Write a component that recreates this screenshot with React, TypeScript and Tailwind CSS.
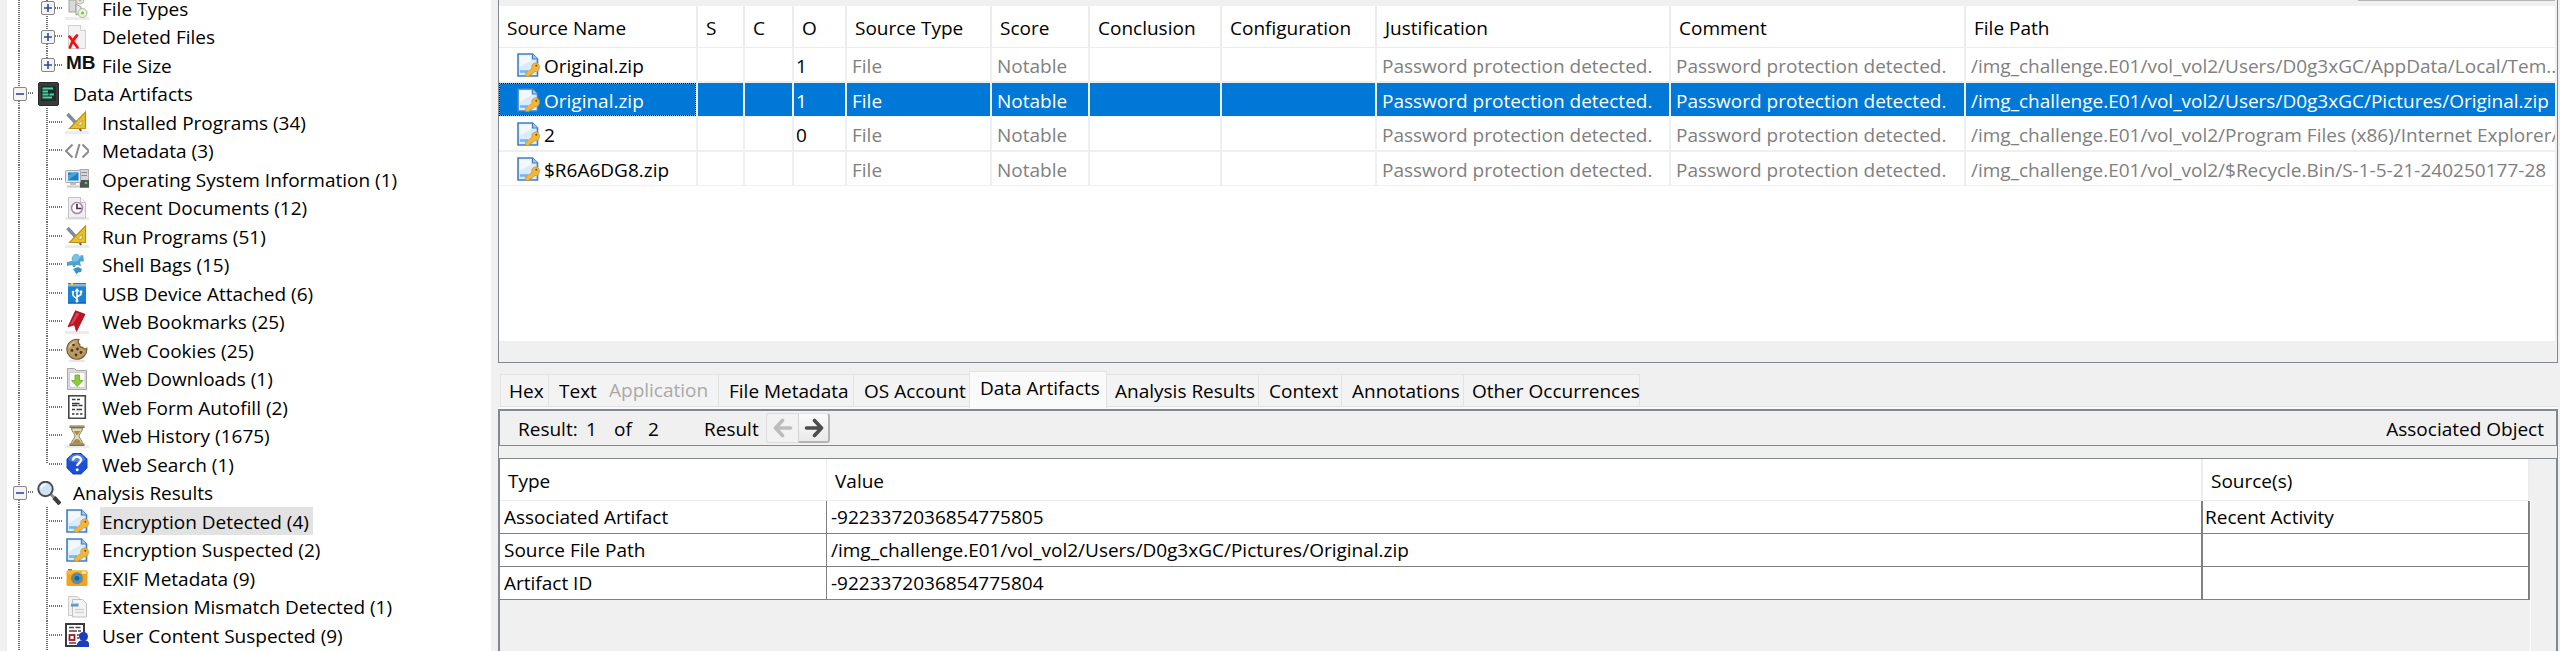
import type { ReactNode } from "react";

/* ---------- Icons ---------- */

function Svg({ children }: { children: ReactNode }) {
  return (
    <svg viewBox="0 0 24 24" className="size-6 shrink-0" aria-hidden="true">
      {children}
    </svg>
  );
}

const Shadow = () => <rect x="0" y="21" width="24" height="3" fill="#ececec" />;

const FileTypesIcon = () => (
  <Svg>
    <Shadow />
    <rect x="4" y="4" width="7" height="12" fill="#d9d9d9" stroke="#a3a3a3" />
    <path d="M11 8l5 3v6l-5 2z" fill="#ededed" stroke="#9a9a9a" />
    <circle cx="15" cy="4" r="4" fill="#f4e3cf" stroke="#c3b3a4" />
    <circle cx="15" cy="4" r="1.5" fill="#7fc3d4" />
    <circle cx="17.500" cy="17" r="4.500" fill="#e7f3d6" stroke="#a5bd8c" />
    <circle cx="17.500" cy="17" r="1.500" fill="#79c152" />
  </Svg>
);

const DeletedIcon = () => (
  <Svg>
    <path d="M3.500 .5h12l5 5v18h-17z" fill="#f3f3f3" stroke="#cfcfcf" />
    <path d="M15.500 .5v5h5" fill="#fff" stroke="#cfcfcf" />
    <path d="M4.500 11.500l8 11M12 10.500c-3 3-5.500 7-7 12" fill="none" stroke="#f01010" strokeWidth="2.600" strokeLinecap="round" />
  </Svg>
);

const DataArtifactsIcon = () => (
  <Svg>
    <rect x="1.500" y=".5" width="20" height="23" rx="1.500" fill="#3a3b3c" stroke="#2a2b2c" />
    <rect x="4" y="4" width="15" height="15" fill="#222b29" />
    <path d="M5.500 6.500h10.500M5.500 9.500h5.500M5.500 12.500h6M12.500 12.500h4.500M5.500 15.500h9.500" stroke="#3fd6a0" strokeWidth="1.900" />
  </Svg>
);

const ToolsIcon = () => (
  <Svg>
    <Shadow />
    <path d="M2.500 4l12 13" stroke="#7d8c99" strokeWidth="3.400" />
    <path d="M14 17l2 4" stroke="#4b5a66" strokeWidth="2" />
    <path d="M20.500 2v16.500H4.500z" fill="#e8c12c" stroke="#b8921a" strokeWidth="1.200" />
    <path d="M17 10.500v4.500h-4.500z" fill="#fff" stroke="#b8921a" strokeWidth=".8" />
  </Svg>
);

const CodeIcon = () => (
  <Svg>
    <path d="M7.500 5.500L1 12l6.500 6.500M17.500 5.500L24 12l-6.500 6.500M14.500 5l-4 14" fill="none" stroke="#8c8c8c" strokeWidth="2" />
  </Svg>
);

const ComputerIcon = () => (
  <Svg>
    <rect x="15" y="2.500" width="8.500" height="18" fill="#d6d6d6" stroke="#ababab" />
    <path d="M16.500 5.500h5.500M16.500 8.500h5.500" stroke="#8d8d8d" />
    <rect x="15" y="13" width="9" height="7.500" fill="#4f5355" />
    <circle cx="21" cy="16" r="1.300" fill="#52d648" />
    <rect x=".5" y="3.500" width="15" height="12" rx="1" fill="#e8e8e8" stroke="#a9a9a9" />
    <rect x="3" y="5.500" width="10.500" height="8" fill="#1680c9" />
    <path d="M3 13.500V8l6-2.500h4.500z" fill="#45a5e3" />
    <path d="M5 16h6v2H5z" fill="#bcbcbc" />
    <path d="M2 18.500h12v2H2z" fill="#c9c9c9" />
  </Svg>
);

const RecentIcon = () => (
  <Svg>
    <Shadow />
    <path d="M3.500 1.500h12l5 5v15.500h-17z" fill="#efefef" stroke="#c2c2c2" />
    <path d="M15.500 1.500v5h5" fill="#fff" stroke="#c2c2c2" />
    <circle cx="12" cy="12" r="5.500" fill="#fbfafc" stroke="#a88bb5" strokeWidth="1.600" />
    <path d="M12 8v4.500h4.500" fill="none" stroke="#3d3347" strokeWidth="1.700" />
  </Svg>
);

const ShellBagsIcon = () => (
  <Svg>
    <path
      d="M8 3c1-3 6-3 6 0l4-1 1 6c-2 1-3 0-4 1l1 4-4-1c-2 0-1 2-3 2s-1-2-2-2l-5 1V9l5-1c0-2-1-3 1-5z"
      fill="#4ea3cd"
    />
    <path d="M8 3c1-3 6-3 6 0l3-.5-5 6-5 0c1-2 0-4 1-5.500z" fill="#7cc2e0" />
    <path d="M8 16l5-2 4 2-1 3-3 .5-1.500 2-1.500-2.500z" fill="#3d94c2" />
    <path d="M10 22.500h5" stroke="#d4e8f2" strokeWidth="1.500" />
  </Svg>
);

const UsbIcon = () => (
  <Svg>
    <rect x="3" y="2.500" width="18" height="20" fill="#1b82d6" />
    <rect x="3" y="2.500" width="18" height="3" fill="#8fb4d1" />
    <path d="M3 2.500h18" stroke="#5a7186" />
    <circle cx="7" cy="3" r="1.300" fill="#ffe400" />
    <path d="M3 22h18" stroke="#0c4f91" />
    <path d="M12 20.500V9M12 18l-4-3.500V11M12 16l4-2.500v-3" fill="none" stroke="#fff" strokeWidth="1.500" />
    <path d="M9.500 10.500L12 7l2.500 3.500z" fill="#fff" />
    <circle cx="8" cy="11" r="1.300" fill="#fff" />
    <rect x="14.800" y="9.500" width="2.500" height="2.500" fill="#fff" />
    <circle cx="12" cy="20" r="1.500" fill="#fff" />
  </Svg>
);

const BookmarkIcon = () => (
  <Svg>
    <Shadow />
    <path d="M10.500 .8l9.500 3.500-8.500 17-2-6.500-6.500 2z" fill="#c01220" stroke="#8e0c18" strokeWidth=".8" />
    <path d="M11.500 2.500l3 1.200-6.500 10-3 1z" fill="#dd4450" />
  </Svg>
);

const CookieIcon = () => (
  <Svg>
    <path d="M4 23h16" stroke="#e6e6e6" strokeWidth="2" />
    <path
      d="M14 1.500a10 10 0 1 0 7.800 8.800c-1.500 1.200-3.500.7-4-1-2 .5-3.500-1-3-2.800-1.500-1-2-3-.8-5z"
      fill="#b99a67"
      stroke="#7a5c33"
      strokeWidth="1.200"
    />
    <path d="M11 3c-4 .5-7 3.500-7.500 7.500l4-3z" fill="#d8c096" />
    <g fill="#4c3519">
      <circle cx="8.500" cy="7" r="1.300" />
      <circle cx="7" cy="12.500" r="1.400" />
      <circle cx="12.500" cy="11" r="1.400" />
      <circle cx="16" cy="14.500" r="1.400" />
      <circle cx="11" cy="17" r="1.400" />
    </g>
  </Svg>
);

const DownloadIcon = () => (
  <Svg>
    <path d="M2.500 1.500h7l2 2h10v19h-19z" fill="#dcdcdc" stroke="#a8a8a8" />
    <rect x="4.500" y="5.500" width="15.500" height="15" fill="#fafafa" stroke="#cecece" />
    <path d="M10 8h4.500v5.500H18L12.200 19.500 6.500 13.500H10z" fill="#8ccb3a" stroke="#6aa524" strokeWidth=".8" />
  </Svg>
);

const FormIcon = () => (
  <Svg>
    <rect x="3.800" y=".8" width="16.500" height="22.500" fill="#fff" stroke="#484848" strokeWidth="1.600" />
    <path
      d="M7 4.500h3.500M12 4.500h3M7 8.500h7.500M7 10.500h5.500M13.500 10.500h4M7 14.500h3M11.500 14.500h5.500M7 19h2.500M11 19h2.500M15 19h2.500"
      stroke="#3c3c3c"
      strokeWidth="1.400"
    />
  </Svg>
);

const HistoryIcon = () => (
  <Svg>
    <Shadow />
    <path d="M6.500 4h11c0 4-3.500 5.500-3.500 8s3.500 4 3.500 8h-11c0-4 3.500-5.500 3.500-8S6.500 8 6.500 4z" fill="#e2dbc2" stroke="#8a7c4e" />
    <path d="M8.500 7h7l-3 4h-1zM8 19c0-2 2.500-4 4-4s4 2 4 4z" fill="#a58f4e" />
    <path d="M4.500 2.800h15M4.500 20.800h15" stroke="#7f7145" strokeWidth="2.600" />
    <path d="M5 2.300h14M5 20.200h14" stroke="#b9ad80" strokeWidth=".8" />
  </Svg>
);

const HelpIcon = () => (
  <Svg>
    <path d="M8 1h8l6.500 6v9L16 22.500H8L1.500 16V7z" fill="#1442c4" />
    <circle cx="12" cy="11.500" r="10" fill="#1d50d2" />
    <path d="M3.500 8a9 9 0 0 1 17 0c-5 3-12 3-17 0z" fill="#4d7fe8" />
    <path d="M8 8.500c0-5 8-5 8-.5 0 3-3.800 3-3.800 6" fill="none" stroke="#fff" strokeWidth="2.400" />
    <circle cx="12.200" cy="17.800" r="1.500" fill="#fff" />
  </Svg>
);

const MagnifierIcon = () => (
  <Svg>
    <path d="M14 13.500l4 4" stroke="#8b8b8b" strokeWidth="3" />
    <path d="M17 16.500l6 6.500" stroke="#3d3d3d" strokeWidth="4.200" />
    <circle cx="8.500" cy="8" r="7.200" fill="#cfe3f6" stroke="#4a4d51" strokeWidth="2" />
    <path d="M4 7.500a5 5 0 0 1 5-4" fill="none" stroke="#f6fbff" strokeWidth="1.800" />
  </Svg>
);

const KeyDocIcon = () => (
  <Svg>
    <path d="M2 1h14.500l5 5v17H2z" fill="#dcebfb" stroke="#3f7fc4" strokeWidth="1.600" />
    <path d="M3.500 2.500H15v5L3.500 14z" fill="#f2f8fe" />
    <path d="M16.500 1v5h5" fill="#a9c9ec" stroke="#3f7fc4" strokeWidth="1.200" />
    <path d="M4 18.500h8" stroke="#6db8f2" strokeWidth="2.600" />
    <path
      d="M23.500 13.500c0-2.800-4-5-6.500-2.500-1.800 1.800-1.200 3.200-.8 4.200l-7 5.300.6 2.800 3.200.2 1-2 2-.3 3-2.800c2.500 1 4.500-1.200 4.500-4.900z"
      fill="#efb83c"
      stroke="#cf962c"
      strokeWidth=".8"
    />
    <circle cx="20.300" cy="12.800" r="1" fill="#7b4f0c" />
  </Svg>
);

const CameraIcon = () => (
  <Svg>
    <path d="M3 3h4v2H3z" fill="#7a7a7a" />
    <rect x="1.500" y="4.500" width="21" height="15.500" rx="1.500" fill="#f5a31a" />
    <path d="M1.500 6a1.500 1.500 0 0 1 1.500-1.500h18a1.500 1.500 0 0 1 1.500 1.500v2h-21z" fill="#f8b738" />
    <rect x="17" y="5.500" width="4" height="2" fill="#fff1c9" />
    <circle cx="12" cy="12.300" r="6" fill="#8f8264" />
    <circle cx="12" cy="12.300" r="4.600" fill="#3d93c4" />
    <circle cx="12" cy="12.300" r="2.300" fill="#1f5f93" />
  </Svg>
);

const MismatchIcon = () => (
  <Svg>
    <path d="M3.500 1.500h9l3 3v16h-12z" fill="#f0f0f0" stroke="#cccccc" />
    <path d="M7.500 4.500h10l4 4v13.500h-14z" fill="#f4f4f4" stroke="#bfbfbf" />
    <path d="M6 8h7.500v3.500H6z" fill="#4a97d3" />
    <path d="M6 8h7.500v1.200H6z" fill="#a9cfec" />
    <path d="M10 14.500h9M10 17.500h9" stroke="#d4d4d4" strokeWidth="1.500" />
  </Svg>
);

const UserContentIcon = () => (
  <Svg>
    <rect x="1" y="1" width="18" height="22" fill="#fff" stroke="#3d3a3c" strokeWidth="2" />
    <path d="M4 4.500h5M10.500 4.500h5M4 8h8M13 8h3M12 12h4M12 15h2" stroke="#4a4749" strokeWidth="1.500" />
    <rect x="4.500" y="12" width="5" height="5" fill="#fff" stroke="#a3122b" strokeWidth="1.800" />
    <path d="M4 20h7" stroke="#4a4749" strokeWidth="1.500" />
    <circle cx="18.500" cy="13.500" r="4.500" fill="#1c3cc0" />
    <path d="M11.500 24c0-5 3-6.500 5-6.500h4c2 0 3.500 1.500 3.500 3V24z" fill="#1c3cc0" />
  </Svg>
);

const MegabyteIcon = () => (
  <span className="pb-1 pl-px font-[Liberation_Sans,sans-serif] text-[19px] leading-5 font-bold text-[#111]" aria-hidden="true">
    MB
  </span>
);

/* ---------- Tree ---------- */

type Node = {
  label: string;
  icon: () => ReactNode;
  level: 1 | 2;
  toggle?: "plus" | "minus";
  last?: boolean;
  selected?: boolean;
};

const NODES: Node[] = [
  { label: "File Types", icon: FileTypesIcon, level: 2, toggle: "plus" },
  { label: "Deleted Files", icon: DeletedIcon, level: 2, toggle: "plus" },
  { label: "File Size", icon: MegabyteIcon, level: 2, toggle: "plus", last: true },
  { label: "Data Artifacts", icon: DataArtifactsIcon, level: 1, toggle: "minus" },
  { label: "Installed Programs (34)", icon: ToolsIcon, level: 2 },
  { label: "Metadata (3)", icon: CodeIcon, level: 2 },
  { label: "Operating System Information (1)", icon: ComputerIcon, level: 2 },
  { label: "Recent Documents (12)", icon: RecentIcon, level: 2 },
  { label: "Run Programs (51)", icon: ToolsIcon, level: 2 },
  { label: "Shell Bags (15)", icon: ShellBagsIcon, level: 2 },
  { label: "USB Device Attached (6)", icon: UsbIcon, level: 2 },
  { label: "Web Bookmarks (25)", icon: BookmarkIcon, level: 2 },
  { label: "Web Cookies (25)", icon: CookieIcon, level: 2 },
  { label: "Web Downloads (1)", icon: DownloadIcon, level: 2 },
  { label: "Web Form Autofill (2)", icon: FormIcon, level: 2 },
  { label: "Web History (1675)", icon: HistoryIcon, level: 2 },
  { label: "Web Search (1)", icon: HelpIcon, level: 2, last: true },
  { label: "Analysis Results", icon: MagnifierIcon, level: 1, toggle: "minus" },
  { label: "Encryption Detected (4)", icon: KeyDocIcon, level: 2, selected: true },
  { label: "Encryption Suspected (2)", icon: KeyDocIcon, level: 2 },
  { label: "EXIF Metadata (9)", icon: CameraIcon, level: 2 },
  { label: "Extension Mismatch Detected (1)", icon: MismatchIcon, level: 2 },
  { label: "User Content Suspected (9)", icon: UserContentIcon, level: 2 },
];

function Guides({ node }: { node: Node }) {
  const deep = node.level === 2;
  return (
    <svg
      className={deep ? "col-start-1 row-start-1 h-full w-[58px]" : "col-start-1 row-start-1 h-full w-[30px]"}
      aria-hidden="true"
      stroke="#707070"
      strokeWidth="2"
      strokeDasharray="1 1"
    >
      <line x1="12" y1="0" x2="12" y2="100%" />
      {deep && <line x1="40" y1="0" x2="40" y2={node.last ? "14" : "100%"} />}
      {deep ? <line x1="42" y1="14" x2="55" y2="14" /> : <line x1="19" y1="14" x2="27" y2="14" />}
    </svg>
  );
}

function Toggle({ node }: { node: Node }) {
  return (
    <button
      type="button"
      aria-label={node.label}
      className={
        node.level === 2
          ? "col-start-1 row-start-1 ml-[34px] size-[14px] self-center rounded-[2px] border border-[#868686] bg-[#f4f4f4]"
          : "col-start-1 row-start-1 ml-[6px] size-[14px] self-center rounded-[2px] border border-[#868686] bg-[#f4f4f4]"
      }
    >
      <svg viewBox="0 0 12 12" className="size-3" aria-hidden="true" stroke="#2f4d9c" strokeWidth="1.600">
        <path d={node.toggle === "plus" ? "M2 6h8M6 2v8" : "M2 6h8"} />
      </svg>
    </button>
  );
}

function Tree() {
  return (
    <nav className="flex w-[491px] shrink-0 overflow-hidden border-l-[7px] border-[#f0f0f0] bg-white">
      <ul className="-mt-1.5 w-full">
        {NODES.map((node) => {
          const Icon = node.icon;
          return (
            <li key={node.label} className="flex odd:h-[28px] even:h-[29px]">
              <div className="grid">
                <Guides node={node} />
                {node.toggle && <Toggle node={node} />}
              </div>
              <div className={node.level === 2 ? "flex w-[35px] items-center" : "flex w-[34px] items-center"}>
                <Icon />
              </div>
              <a
                href="#"
                className={
                  node.selected
                    ? "bg-[#e2e2e2] pt-px pr-1 pl-0.5 leading-7 whitespace-nowrap"
                    : "pt-px pr-1 pl-0.5 leading-7 whitespace-nowrap"
                }
              >
                {node.label}
              </a>
            </li>
          );
        })}
        <li className="h-2">
          <Guides node={{ label: "", icon: () => null, level: 2 }} />
        </li>
      </ul>
    </nav>
  );
}

/* ---------- Result table ---------- */

const COLUMNS: [string, string][] = [
  ["Source Name", "w-[199px]"],
  ["S", "w-[47px]"],
  ["C", "w-[49px]"],
  ["O", "w-[53px]"],
  ["Source Type", "w-[145px]"],
  ["Score", "w-[98px]"],
  ["Conclusion", "w-[132px]"],
  ["Configuration", "w-[155px]"],
  ["Justification", "w-[294px]"],
  ["Comment", "w-[295px]"],
  ["File Path", ""],
];

const FILES = [
  { name: "Original.zip", count: "1", path: "/img_challenge.E01/vol_vol2/Users/D0g3xGC/AppData/Local/Tem..." },
  { name: "Original.zip", count: "1", path: "/img_challenge.E01/vol_vol2/Users/D0g3xGC/Pictures/Original.zip", selected: true },
  { name: "2", count: "0", path: "/img_challenge.E01/vol_vol2/Program Files (x86)/Internet Explorer/..." },
  { name: "$R6A6DG8.zip", count: "", path: "/img_challenge.E01/vol_vol2/$Recycle.Bin/S-1-5-21-240250177-28" },
];

const DETECTED = "Password protection detected.";

function ResultTable() {
  return (
    <section className="flex h-[363px] flex-col border border-t-0 border-[#828790] pr-0.5">
      <div className="flex h-1.5 shrink-0 justify-end">
        <div className="h-px w-[197px] bg-[#b4b4b4]" />
      </div>
      <div className="flex-1 overflow-hidden bg-white">
        <table className="w-full table-fixed border-separate border-spacing-0 text-left">
          <colgroup>
            {COLUMNS.map(([name, width]) => (
              <col key={name} className={width} />
            ))}
          </colgroup>
          <thead>
            <tr className="h-[42px]">
              {COLUMNS.map(([name]) => (
                <th key={name} className="border-r-2 border-b border-[#ececec] pt-0.5 pl-2 font-normal whitespace-nowrap last:border-r-0">
                  {name}
                </th>
              ))}
            </tr>
          </thead>
          <tbody>
            {FILES.map((file, i) => (
              <tr
                key={i}
                className={
                  file.selected
                    ? "h-[34px] bg-[#0078d7] text-white [&>td]:border-r-2 [&>td]:border-b [&>td]:border-[#efefef] [&>td]:pt-0.5 [&>td]:pl-[5px] [&>td:last-child]:border-r-0"
                    : "text-[#808080] odd:h-[35px] even:h-[34px] [&>td]:border-r-2 [&>td]:border-[#efefef] odd:[&>td]:border-b-2 even:[&>td]:border-b [&>td]:pt-0.5 [&>td]:pl-[5px] [&>td:last-child]:border-r-0"
                }
              >
                <td className="p-0!">
                  <div
                    className={
                      file.selected
                        ? "flex h-[33px] items-center gap-1 pl-[17px] whitespace-nowrap shadow-[inset_0_0_0_1px_#ff8728] outline-1 -outline-offset-1 outline-black outline-dotted"
                        : "flex h-[33px] items-center gap-1 pl-[17px] whitespace-nowrap text-black"
                    }
                  >
                    <KeyDocIcon />
                    <span className="pt-0.5">{file.name}</span>
                  </div>
                </td>
                <td />
                <td />
                <td className={file.selected ? "pl-0.5! text-white" : "pl-0.5! text-black"}>{file.count}</td>
                <td>File</td>
                <td>Notable</td>
                <td />
                <td />
                <td className="whitespace-nowrap">{DETECTED}</td>
                <td className="whitespace-nowrap">{DETECTED}</td>
                <td className="overflow-hidden whitespace-nowrap">{file.path}</td>
              </tr>
            ))}
          </tbody>
        </table>
      </div>
      <div className="h-[21px] shrink-0" />
    </section>
  );
}

/* ---------- Content viewer ---------- */

const TABS: [string, string][] = [
  ["Hex", "w-[49px] border-r pl-2"],
  ["Text", "w-[50px] pl-2.5"],
  ["Application", "w-[120px] border-r pb-0.5 pl-2.5 text-[#a9a9a9]"],
  ["File Metadata", "w-[135px] border-r pl-2.5"],
  ["OS Account", "w-[115px] pl-2.5"],
  ["Data Artifacts", ""],
  ["Analysis Results", "w-[152px] border-r pl-2"],
  ["Context", "w-[83px] border-r pl-2.5"],
  ["Annotations", "w-[122px] border-r pl-2.5"],
  ["Other Occurrences", "w-[176px] border-r pl-2"],
];

function Tabs() {
  return (
    <div className="pt-2">
      <div role="tablist" className="flex items-end pl-0.5">
        {TABS.map(([name, style]) => {
          const active = name === "Data Artifacts";
          return (
            <button
              key={name}
              type="button"
              role="tab"
              aria-selected={active}
              disabled={name === "Application"}
              className={
                active
                  ? "relative -mb-0.5 h-[37px] w-[138px] border border-b-0 border-[#e3e3e3] bg-[#fafafa] pb-1 pl-2.5 text-left whitespace-nowrap"
                  : `${style} h-8 border-t border-[#e3e3e3] bg-[#f3f3f3] text-left whitespace-nowrap first:border-l`
              }
            >
              {name}
            </button>
          );
        })}
      </div>
      <div className="h-[3px] border-t border-[#e3e3e3] bg-[#fafafa]" />
    </div>
  );
}

function Arrow({ direction }: { direction: "left" | "right" }) {
  return (
    <svg
      viewBox="0 0 20 20"
      className="size-5"
      aria-hidden="true"
      fill="none"
      stroke={direction === "left" ? "#bdbdbd" : "#4d4d4d"}
      strokeWidth="3.600"
      strokeLinecap="round"
      strokeLinejoin="round"
    >
      <path d={direction === "left" ? "M2.500 10h15M9.500 2.500L2.500 10l7 7.500" : "M2.500 10h15M10.500 2.500l7 7.500-7 7.500"} />
    </svg>
  );
}

const DETAILS = [
  ["Associated Artifact", "-9223372036854775805", "Recent Activity"],
  ["Source File Path", "/img_challenge.E01/vol_vol2/Users/D0g3xGC/Pictures/Original.zip", ""],
  ["Artifact ID", "-9223372036854775804", ""],
];

function Viewer() {
  return (
    <section className="flex min-h-0 flex-1 flex-col">
      <Tabs />
      <div className="flex flex-1 flex-col border-x border-[#828790]">
        <div className="flex h-[37px] items-center border border-t-2 border-[#828790] pr-3 pl-[18px]">
          <span className="w-[68px] pt-0.5">Result:</span>
          <span className="w-7 pt-0.5">1</span>
          <span className="w-[34px] pt-0.5">of</span>
          <span className="w-14 pt-0.5">2</span>
          <span className="w-[62px] pt-0.5">Result</span>
          <button
            type="button"
            disabled
            aria-label="Previous result"
            className="flex h-[30px] w-8 items-center justify-center rounded-l-[3px] border border-r-0 border-[#dcdcdc] bg-[#f2f2f2]"
          >
            <Arrow direction="left" />
          </button>
          <button
            type="button"
            aria-label="Next result"
            className="flex h-[30px] w-8 items-center justify-center rounded-r-[3px] border border-r-2 border-b-2 border-[#b4b4b4] border-t-[#e2e2e2] border-l-[#d5d5d5] bg-linear-to-b from-[#fafafa] to-[#eaeaea]"
          >
            <Arrow direction="right" />
          </button>
          <button type="button" className="ml-auto pt-0.5">
            Associated Object
          </button>
        </div>
        <div className="mt-3 flex flex-1 border-x border-t border-[#828790]">
          <div className="flex-1">
            <table className="w-full table-fixed border-separate border-spacing-0 bg-white text-left">
              <colgroup>
                <col className="w-[327px]" />
                <col />
                <col className="w-[327px]" />
              </colgroup>
              <thead>
                <tr className="h-[42px]">
                  <th className="border-r border-b border-[#ececec] pt-0.5 pl-2 font-normal">Type</th>
                  <th className="border-r-2 border-b border-[#ececec] pt-0.5 pl-2 font-normal">Value</th>
                  <th className="border-r-2 border-b border-[#ececec] pt-0.5 pl-2 font-normal">Source(s)</th>
                </tr>
              </thead>
              <tbody>
                {DETAILS.map(([type, value, source]) => (
                  <tr key={type} className="h-[33px]">
                    <td className="border-r border-b border-[#808080] pl-1">{type}</td>
                    <td className="border-r-2 border-b border-[#808080] pl-1">{value}</td>
                    <td className="border-r-2 border-b border-[#808080] pl-0.5">{source}</td>
                  </tr>
                ))}
              </tbody>
            </table>
          </div>
          <div className="mt-[42px] w-[26px] border-l border-white" />
        </div>
      </div>
    </section>
  );
}

export default function App() {
  return (
    <div className="flex h-screen min-w-[1600px] overflow-hidden bg-[#f0f0f0] font-[Open_Sans,Noto_Sans,sans-serif] text-[19px] leading-6 text-black">
      <Tree />
      <main className="flex min-w-0 flex-1 flex-col pr-0.5 pl-[7px]">
        <ResultTable />
        <Viewer />
      </main>
    </div>
  );
}
